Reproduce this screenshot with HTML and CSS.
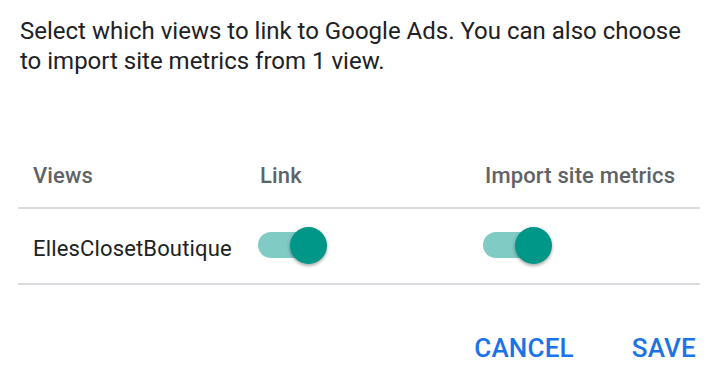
FILE: index.html
```html
<!DOCTYPE html>
<html>
<head>
<meta charset="UTF-8"/>
<title>Link views</title>
<link rel="stylesheet" href="styles.css">
</head>
<body>
<div class="dialog">
  <p class="intro">Select which views to link to Google Ads. You can also choose to import site metrics from 1 view.</p>

  <div class="views">
    <div class="row head">
      <div class="cell">Views</div>
      <div class="cell">Link</div>
      <div class="cell">Import site metrics</div>
    </div>
    <div class="row">
      <div class="cell">EllesClosetBoutique</div>
      <div class="cell"><span class="toggle on"><span class="knob"></span></span></div>
      <div class="cell"><span class="toggle on"><span class="knob"></span></span></div>
    </div>
  </div>

  <div class="actions">
    <a href="#" class="btn">CANCEL</a>
    <a href="#" class="btn">SAVE</a>
  </div>
</div>
</body>
</html>
```

FILE: styles.css
```css
*{margin:0;padding:0;box-sizing:border-box;}
html,body{height:100%;}
body{background:#fff; font-family:Roboto, "Liberation Sans", Arial, sans-serif; color:#202124;}

.dialog{padding:16px 20px 0 18px;}
.intro{font-size:24px; line-height:30px; padding-left:2px; width:680px;}

.views{margin-top:65px; width:682px;}
.row{display:grid; grid-template-columns:227px 225px 1fr; align-items:center; border-bottom:2px solid #dadce0;}
.row .cell{padding-left:15px; font-size:22px; letter-spacing:0.15px;}
.head{height:68px;}
.head .cell{color:#5f6368; font-weight:500; padding-top:2px;}
.row:not(.head){height:76px;}
.row:not(.head) .cell{padding-top:4px;}

.toggle{display:block; position:relative; width:62px; height:26px; margin-left:-2px; margin-top:-6px; border-radius:13px; background:#80cbc4;}
.toggle .knob{position:absolute; top:-5px; right:-7px; width:37px; height:37px; border-radius:50%; background:#009688; box-shadow:0 2px 3px rgba(0,0,0,.25), 0 1px 5px rgba(0,0,0,.12);}

.actions{display:flex; justify-content:flex-end; gap:58px; margin-top:48px; padding-right:4px;}
.btn{color:#1a73e8; text-decoration:none; font-size:26px; font-weight:500; letter-spacing:0.2px;}
```
